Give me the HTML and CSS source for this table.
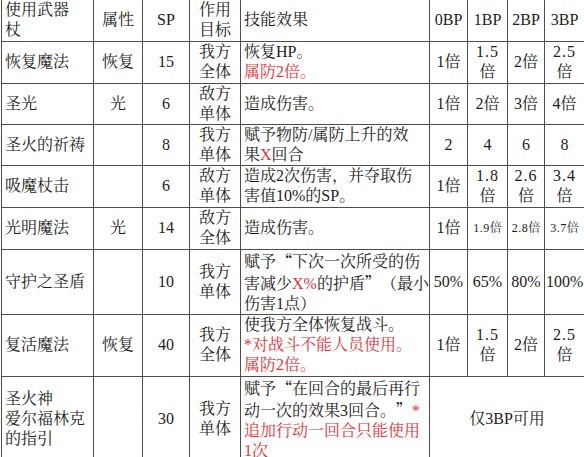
FILE: index.html
```html
<!DOCTYPE html>
<html lang="zh-CN">
<head>
<meta charset="utf-8">
<link rel="stylesheet" href="styles.css">
</head>
<body>
<table class="skills">
  <colgroup>
    <col class="c-name"><col class="c-attr"><col class="c-sp"><col class="c-tgt"><col class="c-eff">
    <col class="c-bp0"><col class="c-bp1"><col class="c-bp2"><col class="c-bp3">
  </colgroup>
  <tr class="h41">
    <td class="l">使用武器<br>杖</td><td>属性</td><td>SP</td><td>作用<br>目标</td><td class="l">技能效果</td>
    <td>0BP</td><td>1BP</td><td>2BP</td><td>3BP</td>
  </tr>
  <tr class="h42">
    <td class="l">恢复魔法</td><td>恢复</td><td>15</td><td>我方<br>全体</td>
    <td class="l">恢复HP。<br><span class="red">属防2倍。</span></td>
    <td>1倍</td><td><span class="n">1.5</span><br>倍</td><td>2倍</td><td><span class="n">2.5</span><br>倍</td>
  </tr>
  <tr class="h41">
    <td class="l">圣光</td><td>光</td><td>6</td><td>敌方<br>单体</td>
    <td class="l">造成伤害。</td>
    <td>1倍</td><td>2倍</td><td>3倍</td><td>4倍</td>
  </tr>
  <tr class="h41">
    <td class="l">圣火的祈祷</td><td></td><td>8</td><td>我方<br>单体</td>
    <td class="l">赋予物防/属防上升的效<br>果<span class="red">X</span>回合</td>
    <td>2</td><td>4</td><td>6</td><td>8</td>
  </tr>
  <tr class="h42">
    <td class="l">吸魔杖击</td><td></td><td>6</td><td>敌方<br>单体</td>
    <td class="l">造成2次伤害，并夺取伤<br>害值10%的SP。</td>
    <td>1倍</td><td><span class="n">1.8</span><br>倍</td><td><span class="n">2.6</span><br>倍</td><td><span class="n">3.4</span><br>倍</td>
  </tr>
  <tr class="h42">
    <td class="l">光明魔法</td><td>光</td><td>14</td><td>敌方<br>全体</td>
    <td class="l">造成伤害。</td>
    <td>1倍</td><td class="sm"><span class="n">1.9</span>倍</td><td class="sm"><span class="n">2.8</span>倍</td><td class="sm"><span class="n">3.7</span>倍</td>
  </tr>
  <tr class="h62">
    <td class="l">守护之圣盾</td><td></td><td>10</td><td>我方<br>单体</td>
    <td class="l">赋予<span class="qo">“</span>下次一次所受的伤<br>害减少<span class="red">X%</span>的护盾<span class="qc">”</span>（最小<br>伤害1点）</td>
    <td>50%</td><td>65%</td><td>80%</td><td>100%</td>
  </tr>
  <tr class="h62">
    <td class="l">复活魔法</td><td>恢复</td><td>40</td><td>我方<br>全体</td>
    <td class="l">使我方全体恢复战斗。<br><span class="red">*对战斗不能人员使用。<br>属防2倍。</span></td>
    <td>1倍</td><td><span class="n">1.5</span><br>倍</td><td>2倍</td><td><span class="n">2.5</span><br>倍</td>
  </tr>
  <tr class="h83">
    <td class="l">圣火神<br>爱尔福林克<br>的指引</td><td></td><td>30</td><td>我方<br>单体</td>
    <td class="l">赋予<span class="qo">“</span>在回合的最后再行<br>动一次的效果3回合。<span class="qc">”</span><span class="red">*<br>追加行动一回合只能使用<br>1次</span></td>
    <td colspan="4">仅3BP可用</td>
  </tr>
</table>
</body>
</html>
```

FILE: styles.css
```css
html, body {
  margin: 0;
  padding: 0;
  background: #ffffff;
}
body {
  padding-left: 1px;
}
.skills {
  border-collapse: collapse;
  table-layout: fixed;
  width: 583px;
  font-family: "Liberation Serif", "Noto Serif CJK SC", "Noto Sans CJK SC", serif;
  font-size: 16px;
  line-height: 20px;
  color: #1c1c1c;
}
.skills td {
  border: 1px solid #4d4d4d;
  padding: 0 1px;
  text-align: center;
  vertical-align: middle;
  white-space: nowrap;
  overflow: hidden;
}
.skills tr:first-child td {
  border-top: none;
}
.skills td.l {
  text-align: left;
  padding-left: 3px;
}
.c-name { width: 92px; }
.c-attr { width: 49px; }
.c-sp { width: 47px; }
.c-tgt { width: 51px; }
.c-eff { width: 189px; }
.c-bp0 { width: 38px; }
.c-bp1 { width: 40px; }
.c-bp2 { width: 37px; }
.c-bp3 { width: 40px; }
.h41 { height: 41px; }
.h42 { height: 42px; }
.h62 { height: 62px; }
.h83 { height: 83px; }
.red {
  color: #e0353b;
}
.qo,
.qc {
  display: inline-block;
  width: 1em;
  font-family: "Noto Sans CJK SC", sans-serif;
}
.qo {
  text-align: right;
}
.qc {
  text-align: left;
}
.n {
  letter-spacing: 1px;
}
.sm {
  font-size: 12px;
}
.sm .n {
  letter-spacing: 0.5px;
}
```
